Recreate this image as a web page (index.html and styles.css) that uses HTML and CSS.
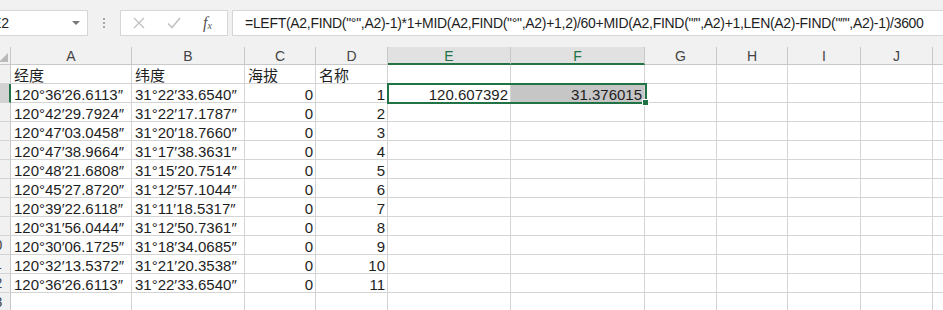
FILE: index.html
```html
<!DOCTYPE html>
<html lang="zh-CN">
<head>
    <meta charset="UTF-8">
    <title>经纬度转换</title>
    <link rel="stylesheet" href="styles.css">
</head>
<body>
    <div class="app">
        <div class="formula-row">
            <div class="name-box">
                <span class="name-text">E2</span>
                <svg class="dropdown" width="8" height="5" viewBox="0 0 8 5"><path d="M0 0 L8 0 L4 4 Z" fill="#777"/></svg>
            </div>
            <div class="grip"><span></span><span></span><span></span></div>
            <div class="fx-buttons">
                <svg width="14" height="14" viewBox="0 0 14 14"><path d="M2 2 L12 12 M12 2 L2 12" stroke="#c2c2c2" stroke-width="1.4" fill="none"/></svg>
                <svg width="16" height="14" viewBox="0 0 16 14"><path d="M2 7.5 L6 11.5 L14 2" stroke="#c2c2c2" stroke-width="1.6" fill="none"/></svg>
                <span class="fx">f<sub>x</sub></span>
            </div>
            <div class="formula-input">=LEFT(A2,FIND("°",A2)-1)*1+MID(A2,FIND("°",A2)+1,2)/60+MID(A2,FIND("′",A2)+1,LEN(A2)-FIND("″",A2)-1)/3600</div>
        </div>

        <div class="sheet">
            <div class="corner"><svg width="9" height="9" viewBox="0 0 9 9"><path d="M9 0 L9 9 L0 9 Z" fill="#b9b9b9"/></svg></div>
            <div class="col-head">A</div>
            <div class="col-head">B</div>
            <div class="col-head">C</div>
            <div class="col-head">D</div>
            <div class="col-head active">E</div>
            <div class="col-head active">F</div>
            <div class="col-head">G</div>
            <div class="col-head">H</div>
            <div class="col-head">I</div>
            <div class="col-head">J</div>
            <div class="col-head">K</div>

            <div class="row-head">1</div>
            <div class="cell">经度</div><div class="cell">纬度</div><div class="cell">海拔</div><div class="cell">名称</div>
            <div class="cell"></div><div class="cell"></div><div class="cell"></div><div class="cell"></div><div class="cell"></div><div class="cell"></div><div class="cell"></div>

            <div class="row-head active">2</div>
            <div class="cell">120°36′26.6113″</div><div class="cell">31°22′33.6540″</div><div class="cell num">0</div><div class="cell num">1</div>
            <div class="cell num">120.607392</div><div class="cell num shaded">31.376015</div><div class="cell"></div><div class="cell"></div><div class="cell"></div><div class="cell"></div><div class="cell"></div>

            <div class="row-head">3</div>
            <div class="cell">120°42′29.7924″</div><div class="cell">31°22′17.1787″</div><div class="cell num">0</div><div class="cell num">2</div>
            <div class="cell"></div><div class="cell"></div><div class="cell"></div><div class="cell"></div><div class="cell"></div><div class="cell"></div><div class="cell"></div>

            <div class="row-head">4</div>
            <div class="cell">120°47′03.0458″</div><div class="cell">31°20′18.7660″</div><div class="cell num">0</div><div class="cell num">3</div>
            <div class="cell"></div><div class="cell"></div><div class="cell"></div><div class="cell"></div><div class="cell"></div><div class="cell"></div><div class="cell"></div>

            <div class="row-head">5</div>
            <div class="cell">120°47′38.9664″</div><div class="cell">31°17′38.3631″</div><div class="cell num">0</div><div class="cell num">4</div>
            <div class="cell"></div><div class="cell"></div><div class="cell"></div><div class="cell"></div><div class="cell"></div><div class="cell"></div><div class="cell"></div>

            <div class="row-head">6</div>
            <div class="cell">120°48′21.6808″</div><div class="cell">31°15′20.7514″</div><div class="cell num">0</div><div class="cell num">5</div>
            <div class="cell"></div><div class="cell"></div><div class="cell"></div><div class="cell"></div><div class="cell"></div><div class="cell"></div><div class="cell"></div>

            <div class="row-head">7</div>
            <div class="cell">120°45′27.8720″</div><div class="cell">31°12′57.1044″</div><div class="cell num">0</div><div class="cell num">6</div>
            <div class="cell"></div><div class="cell"></div><div class="cell"></div><div class="cell"></div><div class="cell"></div><div class="cell"></div><div class="cell"></div>

            <div class="row-head">8</div>
            <div class="cell">120°39′22.6118″</div><div class="cell">31°11′18.5317″</div><div class="cell num">0</div><div class="cell num">7</div>
            <div class="cell"></div><div class="cell"></div><div class="cell"></div><div class="cell"></div><div class="cell"></div><div class="cell"></div><div class="cell"></div>

            <div class="row-head">9</div>
            <div class="cell">120°31′56.0444″</div><div class="cell">31°12′50.7361″</div><div class="cell num">0</div><div class="cell num">8</div>
            <div class="cell"></div><div class="cell"></div><div class="cell"></div><div class="cell"></div><div class="cell"></div><div class="cell"></div><div class="cell"></div>

            <div class="row-head">10</div>
            <div class="cell">120°30′06.1725″</div><div class="cell">31°18′34.0685″</div><div class="cell num">0</div><div class="cell num">9</div>
            <div class="cell"></div><div class="cell"></div><div class="cell"></div><div class="cell"></div><div class="cell"></div><div class="cell"></div><div class="cell"></div>

            <div class="row-head">11</div>
            <div class="cell">120°32′13.5372″</div><div class="cell">31°21′20.3538″</div><div class="cell num">0</div><div class="cell num">10</div>
            <div class="cell"></div><div class="cell"></div><div class="cell"></div><div class="cell"></div><div class="cell"></div><div class="cell"></div><div class="cell"></div>

            <div class="row-head">12</div>
            <div class="cell">120°36′26.6113″</div><div class="cell">31°22′33.6540″</div><div class="cell num">0</div><div class="cell num">11</div>
            <div class="cell"></div><div class="cell"></div><div class="cell"></div><div class="cell"></div><div class="cell"></div><div class="cell"></div><div class="cell"></div>

            <div class="row-head">13</div>
            <div class="cell"></div><div class="cell"></div><div class="cell"></div><div class="cell"></div>
            <div class="cell"></div><div class="cell"></div><div class="cell"></div><div class="cell"></div><div class="cell"></div><div class="cell"></div><div class="cell"></div>

            <!-- 选中区域 E2:F2 -->
            <div class="selection"><span class="handle"></span></div>
        </div>
    </div>
</body>
</html>
```

FILE: styles.css
```css
body {
    margin: 0;
    overflow: hidden;
    background: #fff;
    font-family: "Liberation Sans", "Noto Sans CJK SC", sans-serif;
    color: #1e1e1e;
}
.app {
    width: 943px;
    height: 310px;
    overflow: hidden;
}
.formula-row {
    height: 47px;
    background: #f1f1f1;
    display: flex;
    align-items: flex-start;
    padding-top: 10px;
    box-sizing: border-box;
}
.name-box {
    margin-left: -13px;
    width: 101px;
    height: 26px;
    box-sizing: border-box;
    background: #fff;
    border: 1px solid #d6d6d6;
    display: flex;
    align-items: center;
    padding-left: 4px;
    font-size: 14px;
    color: #222;
}
.name-text {
    flex: 1;
}
.dropdown {
    margin-right: 7px;
}
.grip {
    width: 32px;
    height: 26px;
    display: flex;
    flex-direction: column;
    align-items: center;
    justify-content: center;
    gap: 2px;
}
.grip span {
    width: 2px;
    height: 2px;
    background: #a8a8a8;
}
.fx-buttons {
    width: 108px;
    height: 26px;
    box-sizing: border-box;
    background: #fff;
    border: 1px solid #d6d6d6;
    display: flex;
    align-items: center;
    padding-left: 11px;
    gap: 20px;
}
.fx {
    font-family: "Liberation Serif", serif;
    font-style: italic;
    font-size: 16px;
    color: #555;
    margin-left: 1px;
}
.fx sub {
    font-size: 10px;
    vertical-align: -1px;
}
.formula-input {
    margin-left: 4px;
    flex: 1;
    height: 26px;
    box-sizing: border-box;
    background: #fff;
    border: 1px solid #d6d6d6;
    border-right: none;
    padding-left: 12px;
    font-size: 14px;
    letter-spacing: -0.3px;
    line-height: 24px;
    white-space: nowrap;
    overflow: hidden;
    color: #1e1e1e;
}
.sheet {
    position: relative;
    margin-left: -21px;
    width: 1026px;
    display: grid;
    grid-template-columns: 32px 121px 113px 71px 72px 123px 134px 72px 71px 73px 72px 72px;
    grid-template-rows: 18px repeat(13, 19px);
}
.corner {
    background: #f1f1f1;
    border-right: 1px solid #c9c9c9;
    border-bottom: 1px solid #c9c9c9;
    display: flex;
    align-items: flex-end;
    justify-content: flex-end;
    padding: 0 2px 2px 0;
}
.col-head {
    background: #f1f1f1;
    border-right: 1px solid #c9c9c9;
    border-bottom: 1px solid #c9c9c9;
    text-align: center;
    font-size: 14px;
    line-height: 18px;
    color: #444;
}
.col-head.active {
    background: #e1e1e1;
    color: #217346;
    border-bottom: 2px solid #217346;
}
.row-head {
    background: #f1f1f1;
    border-right: 1px solid #c9c9c9;
    border-bottom: 1px solid #d4d4d4;
    text-align: center;
    font-size: 14px;
    line-height: 19px;
    color: #444;
}
.row-head.active {
    background: #d2d2d2;
    color: #217346;
    border-right: 2px solid #217346;
}
.cell {
    border-right: 1px solid #d4d4d4;
    border-bottom: 1px solid #d4d4d4;
    font-size: 15px;
    line-height: 15px;
    padding: 0 2px 0 3px;
    white-space: nowrap;
    overflow: hidden;
    display: flex;
    align-items: flex-end;
}
.cell.num {
    justify-content: flex-end;
}
.cell.shaded {
    background: #c6c6c6;
}
.selection {
    position: absolute;
    left: 408px;
    top: 36px;
    width: 260px;
    height: 21px;
    box-sizing: border-box;
    border: 2px solid #217346;
}
.handle {
    position: absolute;
    right: -4px;
    bottom: -4px;
    width: 5px;
    height: 5px;
    background: #217346;
    border: 1px solid #fff;
}
```
